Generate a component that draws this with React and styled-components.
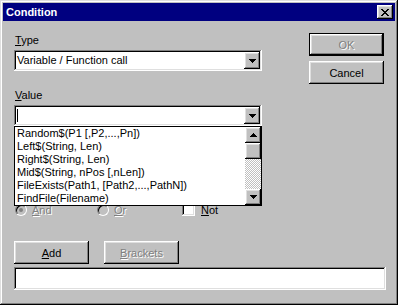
import React from 'react';
import styled, { createGlobalStyle, css } from 'styled-components';

const GlobalStyle = createGlobalStyle`
  html, body {
    margin: 0;
    padding: 0;
    background: #c0c0c0;
  }
  body {
    font-family: "Liberation Sans", Arial, sans-serif;
    font-size: 11px;
    color: #000;
  }
`;

const raised = css`
  box-shadow: inset -1px -1px #000, inset 1px 1px #fff, inset -2px -2px #808080,
    inset 2px 2px #dfdfdf;
`;

const sunken = css`
  box-shadow: inset -1px -1px #fff, inset 1px 1px #808080, inset -2px -2px #dfdfdf,
    inset 2px 2px #000;
`;

const disabledText = css`
  color: #808080;
  text-shadow: 1px 1px 0 #fff;
`;

const Window = styled.div`
  width: 398px;
  height: 305px;
  box-sizing: border-box;
  padding: 3px;
  background: #c0c0c0;
  box-shadow: inset -1px -1px #000, inset 1px 1px #dfdfdf, inset -2px -2px #808080,
    inset 2px 2px #fff;
  display: flex;
  flex-direction: column;
  overflow: hidden;
`;

const TitleBar = styled.div`
  height: 18px;
  background: #000080;
  color: #fff;
  display: flex;
  align-items: center;
  justify-content: space-between;
  padding: 0 2px 0 3px;
`;

const Title = styled.span`
  font-weight: bold;
  font-size: 11px;
`;

const CloseButton = styled.div`
  width: 16px;
  height: 14px;
  background: #c0c0c0;
  ${raised};
  display: flex;
  align-items: center;
  justify-content: center;
  padding-right: 1px;
  box-sizing: border-box;
`;

const Content = styled.div`
  padding: 12px 0 0 11px;
  display: flex;
  flex-direction: column;
`;

const TopRow = styled.div`
  display: flex;
  align-items: flex-start;
`;

const LeftCol = styled.div`
  width: 248px;
  display: flex;
  flex-direction: column;
`;

const RightCol = styled.div`
  margin-left: 47px;
  display: flex;
  flex-direction: column;
  gap: 5px;
`;

const Label = styled.div`
  height: 13px;
  line-height: 13px;
  margin-top: ${(p) => p.$top}px;
  padding-left: 1px;
`;

const ComboWrap = styled.div`
  position: relative;
  margin-top: 3px;
`;

const Combo = styled.div`
  height: 21px;
  box-sizing: border-box;
  padding: 2px;
  background: #fff;
  ${sunken};
  display: flex;
`;

const ComboText = styled.div`
  flex: 1;
  padding-left: 1px;
  line-height: 17px;
  display: flex;
  align-items: center;
`;

const Caret = styled.span`
  width: 1px;
  height: 13px;
  background: #000;
`;

const ArrowButton = styled.div`
  width: 16px;
  height: ${(p) => p.$h || 17}px;
  flex-shrink: 0;
  box-sizing: border-box;
  background: #c0c0c0;
  ${raised};
  display: flex;
  align-items: center;
  justify-content: center;
`;

const DropList = styled.div`
  position: absolute;
  left: 0;
  top: 100%;
  width: 248px;
  height: 80px;
  box-sizing: border-box;
  border: 1px solid #000;
  background: #fff;
  display: flex;
  z-index: 2;
  overflow: hidden;
`;

const Items = styled.div`
  flex: 1;
  padding-left: 2px;
  overflow: hidden;
`;

const Item = styled.div`
  height: 13px;
  line-height: 13px;
  white-space: nowrap;
`;

const ScrollBar = styled.div`
  width: 16px;
  display: flex;
  flex-direction: column;
`;

const Thumb = styled.div`
  height: 16px;
  box-sizing: border-box;
  background: #c0c0c0;
  ${raised};
`;

const Track = styled.div`
  flex: 1;
  background: repeating-conic-gradient(#c0c0c0 0% 25%, #fff 0% 50%) 0 0 / 2px 2px;
`;

const OptionRow = styled.div`
  margin-top: 77px;
  height: 13px;
  padding-left: 1px;
  display: flex;
  align-items: center;
`;

const Option = styled.div`
  width: ${(p) => p.$w || 'auto'};
  display: flex;
  align-items: center;
  gap: ${(p) => p.$gap}px;
  ${(p) => p.$disabled && disabledText};
`;

const Radio = styled.span`
  width: 12px;
  height: 12px;
  box-sizing: border-box;
  border-radius: 50%;
  border: 1px solid;
  border-color: #808080 #fff #fff #808080;
  background: ${(p) => (p.$disabled ? '#c0c0c0' : '#fff')};
  box-shadow: inset 1px 1px #000;
  display: flex;
  align-items: center;
  justify-content: center;
  text-shadow: none;
`;

const Dot = styled.span`
  width: 4px;
  height: 4px;
  border-radius: 50%;
  background: #808080;
`;

const Check = styled.span`
  width: 13px;
  height: 13px;
  box-sizing: border-box;
  background: #fff;
  ${sunken};
`;

const ButtonRow = styled.div`
  margin-top: 25px;
  display: flex;
  gap: 15px;
`;

const Button = styled.div`
  width: 75px;
  height: 23px;
  box-sizing: border-box;
  background: #c0c0c0;
  display: flex;
  align-items: center;
  justify-content: center;
  ${(p) =>
    p.$default
      ? css`
          border: 1px solid #000;
          ${raised};
        `
      : raised};
  ${(p) => p.$disabled && disabledText};
`;

const Edit = styled.div`
  margin-top: 3px;
  width: 372px;
  height: 23px;
  box-sizing: border-box;
  background: #fff;
  ${sunken};
`;

const DownArrow = () => (
  <svg width="7" height="4" viewBox="0 0 7 4" shapeRendering="crispEdges">
    <rect x="0" y="0" width="7" height="1" fill="#000" />
    <rect x="1" y="1" width="5" height="1" fill="#000" />
    <rect x="2" y="2" width="3" height="1" fill="#000" />
    <rect x="3" y="3" width="1" height="1" fill="#000" />
  </svg>
);

const UpArrow = () => (
  <svg width="7" height="4" viewBox="0 0 7 4" shapeRendering="crispEdges">
    <rect x="3" y="0" width="1" height="1" fill="#000" />
    <rect x="2" y="1" width="3" height="1" fill="#000" />
    <rect x="1" y="2" width="5" height="1" fill="#000" />
    <rect x="0" y="3" width="7" height="1" fill="#000" />
  </svg>
);

const CloseGlyph = () => (
  <svg width="8" height="7" viewBox="0 0 8 7" shapeRendering="crispEdges">
    <rect x="0" y="0" width="2" height="1" fill="#000" />
    <rect x="6" y="0" width="2" height="1" fill="#000" />
    <rect x="1" y="1" width="2" height="1" fill="#000" />
    <rect x="5" y="1" width="2" height="1" fill="#000" />
    <rect x="2" y="2" width="4" height="1" fill="#000" />
    <rect x="3" y="3" width="2" height="1" fill="#000" />
    <rect x="2" y="4" width="4" height="1" fill="#000" />
    <rect x="1" y="5" width="2" height="1" fill="#000" />
    <rect x="5" y="5" width="2" height="1" fill="#000" />
    <rect x="0" y="6" width="2" height="1" fill="#000" />
    <rect x="6" y="6" width="2" height="1" fill="#000" />
  </svg>
);

const functions = [
  'Random$(P1 [,P2,...,Pn])',
  'Left$(String, Len)',
  'Right$(String, Len)',
  'Mid$(String, nPos [,nLen])',
  'FileExists(Path1, [Path2,...,PathN])',
  'FindFile(Filename)',
];

const App = () => {
  return (
    <>
      <GlobalStyle />
      <Window>
        <TitleBar>
          <Title>Condition</Title>
          <CloseButton>
            <CloseGlyph />
          </CloseButton>
        </TitleBar>
        <Content>
          <TopRow>
            <LeftCol>
              <Label $top={1}>
                <u>T</u>ype
              </Label>
              <ComboWrap>
                <Combo>
                  <ComboText>Variable / Function call</ComboText>
                  <ArrowButton>
                    <DownArrow />
                  </ArrowButton>
                </Combo>
              </ComboWrap>

              <Label $top={18}>
                <u>V</u>alue
              </Label>
              <ComboWrap>
                <Combo>
                  <ComboText>
                    <Caret />
                  </ComboText>
                  <ArrowButton>
                    <DownArrow />
                  </ArrowButton>
                </Combo>
                <DropList>
                  <Items>
                    {functions.map((f) => (
                      <Item key={f}>{f}</Item>
                    ))}
                  </Items>
                  <ScrollBar>
                    <ArrowButton $h={16}>
                      <UpArrow />
                    </ArrowButton>
                    <Thumb />
                    <Track />
                    <ArrowButton $h={16}>
                      <DownArrow />
                    </ArrowButton>
                  </ScrollBar>
                </DropList>
              </ComboWrap>

              <OptionRow>
                <Option $w="82px" $gap={5} $disabled>
                  <Radio $disabled>
                    <Dot />
                  </Radio>
                  <span>
                    <u>A</u>nd
                  </span>
                </Option>
                <Option $w="85px" $gap={5} $disabled>
                  <Radio $disabled />
                  <span>
                    <u>O</u>r
                  </span>
                </Option>
                <Option $gap={6}>
                  <Check />
                  <span>
                    <u>N</u>ot
                  </span>
                </Option>
              </OptionRow>

              <ButtonRow>
                <Button>
                  <span>
                    <u>A</u>dd
                  </span>
                </Button>
                <Button $disabled>
                  <span>
                    <u>B</u>rackets
                  </span>
                </Button>
              </ButtonRow>
            </LeftCol>

            <RightCol>
              <Button $default $disabled>
                OK
              </Button>
              <Button>Cancel</Button>
            </RightCol>
          </TopRow>
          <Edit />
        </Content>
      </Window>
    </>
  );
};

export default App;
